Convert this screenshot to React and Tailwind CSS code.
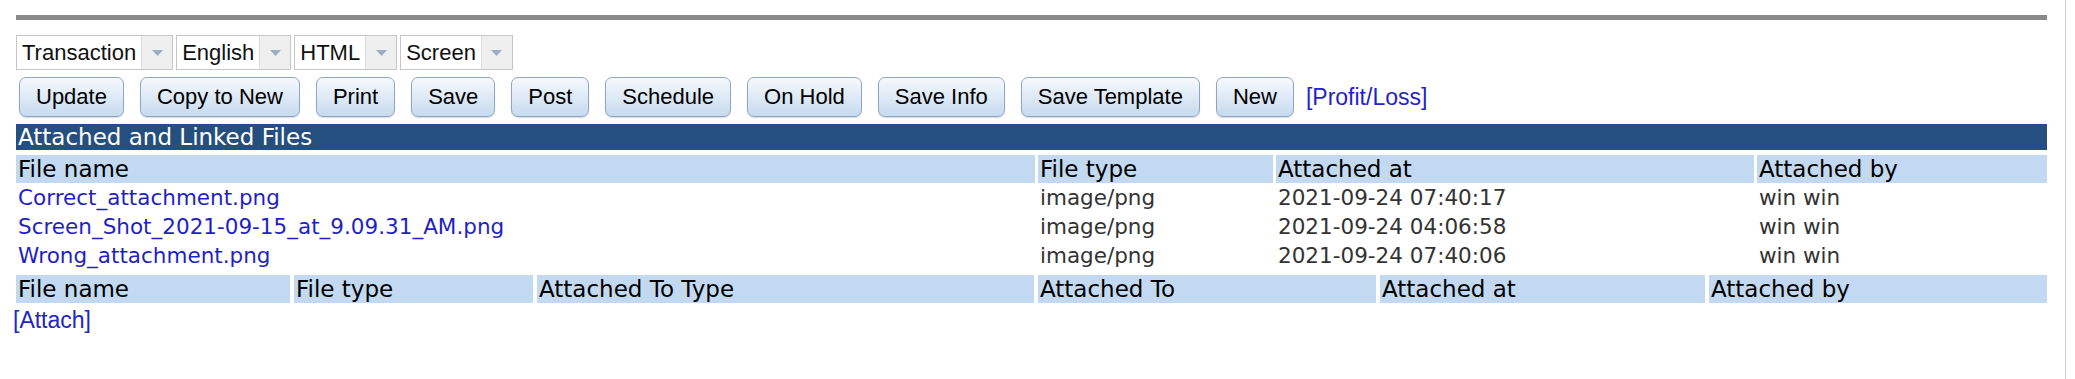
const selects = ["Transaction", "English", "HTML", "Screen"];

const buttons = [
  "Update",
  "Copy to New",
  "Print",
  "Save",
  "Post",
  "Schedule",
  "On Hold",
  "Save Info",
  "Save Template",
  "New",
];

const files = [
  { name: "Correct_attachment.png", type: "image/png", at: "2021-09-24 07:40:17", by: "win win" },
  { name: "Screen_Shot_2021-09-15_at_9.09.31_AM.png", type: "image/png", at: "2021-09-24 04:06:58", by: "win win" },
  { name: "Wrong_attachment.png", type: "image/png", at: "2021-09-24 07:40:06", by: "win win" },
];

const linkedCols = ["File name", "File type", "Attached To Type", "Attached To", "Attached at", "Attached by"];

const verdana = { fontFamily: '"DejaVu Sans", Verdana, sans-serif' };

const SelectBox = ({ label }) => (
  <div className="flex h-[35px] border border-[#c6c6c6] bg-white">
    <span className="flex items-center px-[5px] text-[22px] text-[#111]">{label}</span>
    <span className="flex w-[31px] items-center justify-center border-l border-[#dcdcdc] bg-[#efefef]">
      <svg width="11" height="6" viewBox="0 0 11 6">
        <path d="M0 0 H11 L5.5 6 Z" fill="#9cadc6" />
      </svg>
    </span>
  </div>
);

const ToolButton = ({ label }) => (
  <button className="h-[40px] rounded-[7px] border border-[#8ea6c2] bg-gradient-to-b from-[#f6f9fd] to-[#c7daef] px-4 text-[22px] leading-none text-black shadow-[0_1px_1px_rgba(0,0,0,0.15)]">
    {label}
  </button>
);

export default function App() {
  return (
    <div className="flex min-h-[379px] w-[2075px] bg-white" style={{ fontFamily: '"Liberation Sans", Arial, sans-serif' }}>
      <div className="w-[2066px] border-r border-[#cfcfd4] pl-[16px] pr-[18px]">
        {/* top rule */}
        <div className="mt-[15px] h-[5px] bg-[#8a8a8a]" />

        {/* selects */}
        <div className="mt-[15px] flex gap-[3px]">
          {selects.map((s) => (
            <SelectBox key={s} label={s} />
          ))}
        </div>

        {/* toolbar */}
        <div className="mt-[7px] flex items-center gap-4 pl-[3px]">
          {buttons.map((b) => (
            <ToolButton key={b} label={b} />
          ))}
          <a className="-ml-1 text-[23px] text-[#2323c8]">[Profit/Loss]</a>
        </div>

        <div style={verdana}>
          {/* section title */}
          <div className="mt-[7px] h-[26px] bg-[#244f7f] px-[2px] text-[23px] leading-[26px] text-white">
            Attached and Linked Files
          </div>

          {/* attached files */}
          <div className="mt-[5px] grid grid-cols-[1019px_235px_478px_1fr] gap-x-[3px] gap-y-[1px] leading-[28px]">
            {["File name", "File type", "Attached at", "Attached by"].map((h) => (
              <div key={h} className="bg-[#c3d9f1] px-[2px] text-[23px] text-black">
                {h}
              </div>
            ))}
            {files.map((f) => (
              <div key={f.name} className="contents text-[21.5px] text-[#333]">
                <a className="px-[2px] text-[#1f1fc4]">{f.name}</a>
                <div className="px-[2px]">{f.type}</div>
                <div className="px-[2px]">{f.at}</div>
                <div className="px-[2px]">{f.by}</div>
              </div>
            ))}
          </div>

          {/* linked records */}
          <div className="mt-[5px] grid grid-cols-[274px_239px_497px_338px_325px_1fr] gap-x-[4px] text-[23px] leading-[28px]">
            {linkedCols.map((h, i) => (
              <div key={i} className="bg-[#c3d9f1] px-[2px] text-black">
                {h}
              </div>
            ))}
          </div>
        </div>

        <a className="-ml-[3px] mt-[4px] block text-[23px] leading-[26px] text-[#2323c8]">[Attach]</a>
      </div>
    </div>
  );
}
